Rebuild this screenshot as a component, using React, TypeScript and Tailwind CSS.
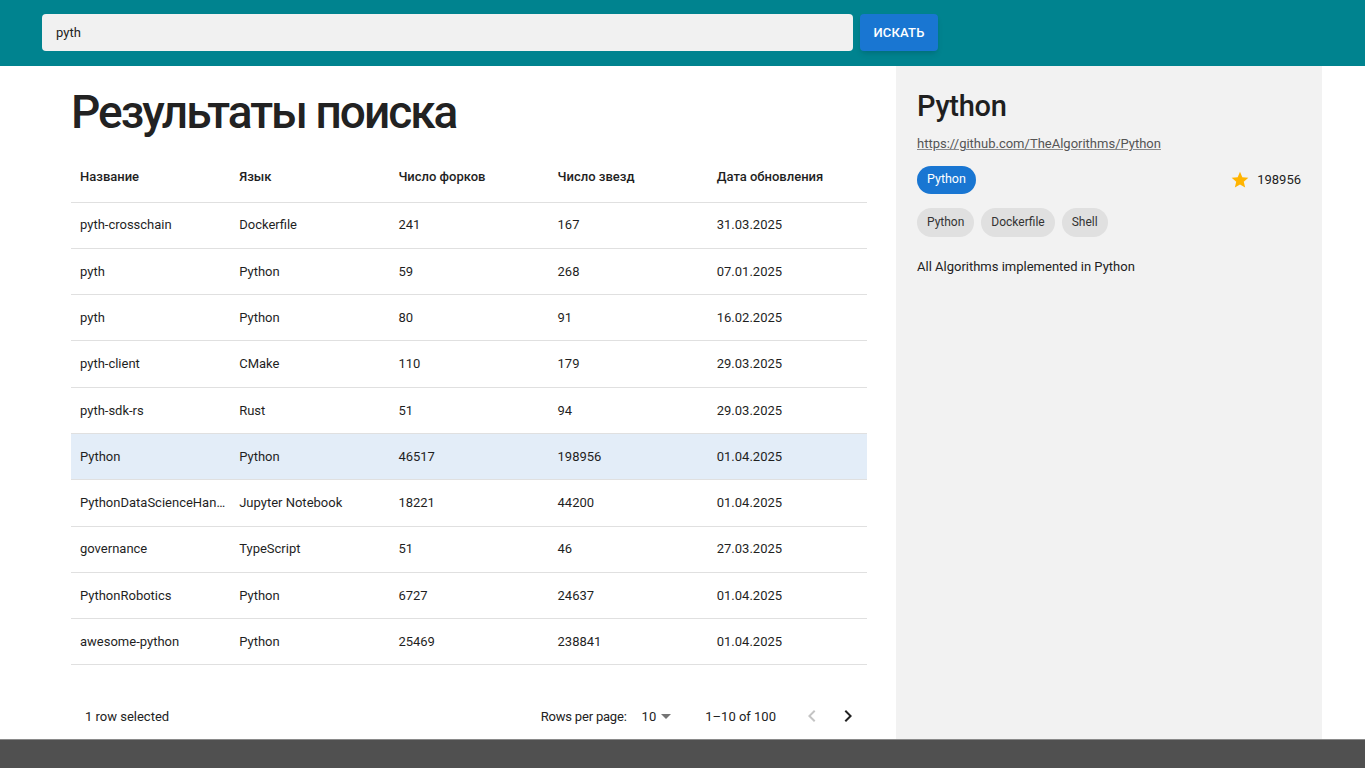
const rows = [
  { name: 'pyth-crosschain', lang: 'Dockerfile', forks: '241', stars: '167', date: '31.03.2025' },
  { name: 'pyth', lang: 'Python', forks: '59', stars: '268', date: '07.01.2025' },
  { name: 'pyth', lang: 'Python', forks: '80', stars: '91', date: '16.02.2025' },
  { name: 'pyth-client', lang: 'CMake', forks: '110', stars: '179', date: '29.03.2025' },
  { name: 'pyth-sdk-rs', lang: 'Rust', forks: '51', stars: '94', date: '29.03.2025' },
  { name: 'Python', lang: 'Python', forks: '46517', stars: '198956', date: '01.04.2025', selected: true },
  { name: 'PythonDataScienceHandbook', lang: 'Jupyter Notebook', forks: '18221', stars: '44200', date: '01.04.2025' },
  { name: 'governance', lang: 'TypeScript', forks: '51', stars: '46', date: '27.03.2025' },
  { name: 'PythonRobotics', lang: 'Python', forks: '6727', stars: '24637', date: '01.04.2025' },
  { name: 'awesome-python', lang: 'Python', forks: '25469', stars: '238841', date: '01.04.2025' }
]

const cols = ['Название', 'Язык', 'Число форков', 'Число звезд', 'Дата обновления']

export default function App() {
  return (
    <div className="min-h-screen bg-white font-['Roboto',sans-serif] text-[#1f1f1f]">
      <header className="flex h-[66px] items-start gap-[7px] bg-[#00838f] pl-[42px] pt-[14px]">
        <div className="flex h-[37px] w-[811px] items-center rounded bg-[#f1f1f1] px-[14px] text-[13px] text-[#222]">
          pyth
        </div>
        <button className="h-[37px] w-[78px] rounded bg-[#1976d2] text-[13px] font-medium tracking-[0.2px] text-white shadow-md">
          ИСКАТЬ
        </button>
      </header>

      <main className="flex h-[673px]">
        <section className="flex w-[896px] flex-col pl-[71px] pr-[29px]">
          <h1 className="mt-[20px] h-[52px] text-[46px] font-medium leading-[52px] tracking-[-2px] text-[#222]">
            Результаты поиска
          </h1>
          <table className="mt-[14px] w-full table-fixed border-collapse text-[13px]">
            <thead>
              <tr className="h-[50px] border-b border-[#e0e0e0]">
                {cols.map(c => (
                  <th key={c} className="px-[9px] text-left font-medium text-[#1f1f1f]">
                    {c}
                  </th>
                ))}
              </tr>
            </thead>
            <tbody>
              {rows.map((r, i) => (
                <tr
                  key={i}
                  className={
                    'h-[46.3px] border-b border-[#e0e0e0] ' + (r.selected ? 'bg-[#e3edf8]' : '')
                  }
                >
                  <td className="truncate pl-[9px] pr-[4px]">{r.name}</td>
                  <td className="px-[9px]">{r.lang}</td>
                  <td className="px-[9px]">{r.forks}</td>
                  <td className="px-[9px]">{r.stars}</td>
                  <td className="px-[9px]">{r.date}</td>
                </tr>
              ))}
            </tbody>
          </table>
          <div className="mt-[39px] flex items-center text-[13px] text-[#222]">
            <span className="ml-[14px]">1 row selected</span>
            <span className="ml-auto tracking-[-0.2px]">Rows per page:</span>
            <span className="ml-[15px]">10</span>
            <svg className="ml-[5px]" width="10" height="5" viewBox="0 0 10 5">
              <path d="M0 0 L10 0 L5 5 Z" fill="#757575" />
            </svg>
            <span className="ml-[34px]">1–10 of 100</span>
            <svg className="ml-[24px]" width="24" height="24" viewBox="0 0 24 24">
              <path d="M15.41 7.41 14 6l-6 6 6 6 1.41-1.41L10.83 12z" fill="#c4c4c4" />
            </svg>
            <svg className="ml-[12px] mr-[7px]" width="24" height="24" viewBox="0 0 24 24">
              <path d="M10 6 8.59 7.41 13.17 12l-4.58 4.59L10 18l6-6z" fill="#222" />
            </svg>
          </div>
        </section>

        <aside className="w-[426px] bg-[#f2f2f2] px-[21px] pt-[22px]">
          <h2 className="text-[29px] font-medium leading-[36px] tracking-[-0.3px] text-[#1f1f1f]">Python</h2>
          <a className="mt-[10px] block text-[13px] text-[#555] underline decoration-[#888]">
            https://github.com/TheAlgorithms/Python
          </a>
          <div className="mt-[12px] flex items-center">
            <span className="flex h-[28px] items-center rounded-full bg-[#1976d2] px-[10px] text-[12.5px] text-white">
              Python
            </span>
            <svg className="ml-auto" width="20" height="20" viewBox="0 0 24 24">
              <path
                d="M12 17.27 18.18 21l-1.64-7.03L22 9.24l-7.19-.61L12 2 9.19 8.63 2 9.24l5.46 4.73L5.82 21z"
                fill="#ffb400"
              />
            </svg>
            <span className="ml-[7px] text-[13px] text-[#222]">198956</span>
          </div>
          <div className="mt-[14px] flex gap-[7px]">
            {['Python', 'Dockerfile', 'Shell'].map(t => (
              <span
                key={t}
                className="flex h-[29px] items-center rounded-full bg-[#e0e0e0] px-[10px] text-[12px] text-[#333]"
              >
                {t}
              </span>
            ))}
          </div>
          <p className="mt-[20px] text-[13px] text-[#222]">All Algorithms implemented in Python</p>
        </aside>
      </main>

      <footer className="h-[29px] border-t border-[#8a8a8a] bg-[#505050]" />
    </div>
  )
}
